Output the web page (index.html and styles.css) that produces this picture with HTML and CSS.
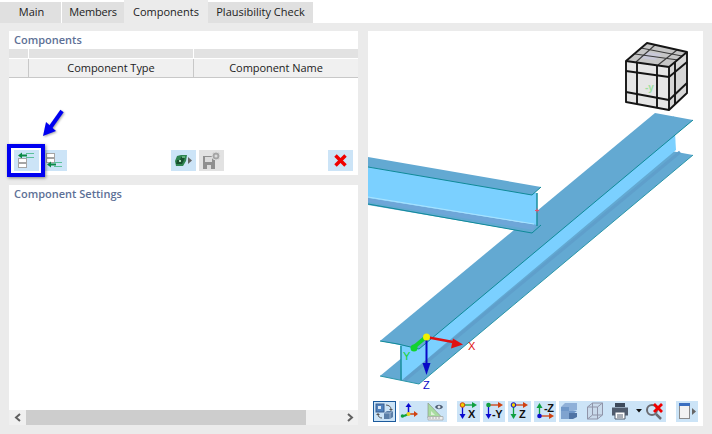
FILE: index.html
```html
<!DOCTYPE html>
<html lang="en">
<head>
  <meta charset="UTF-8">
  <title>Components</title>
  <link rel="stylesheet" href="styles.css">
</head>
<body>
  <div class="tabs">
    <div class="tab tab-main">Main</div>
    <div class="tab tab-members">Members</div>
    <div class="tab tab-active">Components</div>
    <div class="tab tab-check">Plausibility Check</div>
  </div>

  <div class="main">
    <div class="left">
      <div class="panel panel-components">
        <h4>Components</h4>
        <div class="table-head">
          <div class="head-row head-top"><span class="c1"></span><span class="c2"></span><span class="c3"></span></div>
          <div class="head-row head-names"><span class="c1"></span><span class="c2">Component Type</span><span class="c3">Component Name</span></div>
        </div>
        <div class="table-body"></div>
        <div class="comp-tools">
          <button class="tool tool-25">
            <svg width="25" height="21" viewBox="0 0 25 21">
              <path d="M12 3.500h8M12 7.500h8" stroke="#5cc09a" fill="none"/>
              <path d="M4 5.500l4-3v2h5v2H8v2z" fill="#0b8a45"/>
              <rect x="4.500" y="8.500" width="8" height="4" fill="#fff" stroke="#a5a5a5"/>
              <rect x="4.500" y="13.500" width="8" height="4" fill="#fff" stroke="#a5a5a5"/>
            </svg>
          </button>
          <button class="tool tool-23 tool-second">
            <svg width="23" height="21" viewBox="0 0 23 21">
              <rect x="2.500" y="3.500" width="8" height="4" fill="#fff" stroke="#a5a5a5"/>
              <rect x="2.500" y="8.500" width="8" height="4" fill="#fff" stroke="#a5a5a5"/>
              <path d="M10 12.500h8M10 16.500h8" stroke="#5cc09a" fill="none"/>
              <path d="M3 14.500l4-3v2h5v2H7v2z" fill="#0b8a45"/>
            </svg>
          </button>
          <button class="tool tool-25 push">
            <svg width="25" height="21" viewBox="0 0 25 21">
              <path d="M4 11l2-5 4-1h6l-1 6-3 5H5z" fill="#2e8450"/>
              <path d="M6 10h3l1-3h4l-1 3-2 4H5z" fill="#17502e"/>
              <path d="M8 10h2v2H8z" fill="#a9d8b8"/>
              <path d="M11 6h3v2h-3z" fill="#5fae7c"/>
              <path d="M17 7l4 3.500-4 3.500z" fill="#666"/>
            </svg>
          </button>
          <button class="tool tool-25 tool-off">
            <svg width="25" height="21" viewBox="0 0 25 21">
              <path d="M4 6h12v13H4z" fill="#8f8f8f"/>
              <path d="M6 7h7v5H6z" fill="#dcdcdc"/>
              <path d="M8 15h4v4H8z" fill="#dcdcdc"/>
              <circle cx="17" cy="6" r="4" fill="#a5a5a5" stroke="#dcdcdc"/>
              <circle cx="17" cy="6" r="1.500" fill="#dcdcdc"/>
            </svg>
          </button>
          <button class="tool tool-25 tool-delete">
            <svg width="25" height="21" viewBox="0 0 25 21">
              <path d="M7.500 5.500l10 10M17.500 5.500l-10 10" stroke="#f00000" stroke-width="3.500" fill="none"/>
            </svg>
          </button>
        </div>

        <!-- annotation over the toolbar -->
        <div class="marker"></div>
        <svg class="marker-arrow" width="30" height="36" viewBox="0 0 30 36">
          <path d="M22 3L10 20" stroke="#0000f0" stroke-width="4" fill="none"/>
          <path d="M3 28l3-14 10 9z" fill="#0000f0"/>
        </svg>
      </div>

      <div class="panel panel-settings">
        <h4>Component Settings</h4>
        <div class="settings-body"></div>
        <div class="scrollbar">
          <span class="scroll-btn">
            <svg width="8" height="9" viewBox="0 0 8 9"><path d="M6 1L2 4.500 6 8" stroke="#606060" stroke-width="2" fill="none"/></svg>
          </span>
          <div class="scroll-track"><div class="scroll-thumb"></div></div>
          <span class="scroll-btn">
            <svg width="8" height="9" viewBox="0 0 8 9"><path d="M2 1l4 3.500L2 8" stroke="#606060" stroke-width="2" fill="none"/></svg>
          </span>
        </div>
      </div>
    </div>

    <div class="panel panel-view">
      <svg class="view" width="335" height="366" viewBox="368 31 335 366">
        <!-- long beam -->
        <polygon points="380,376 655,148 693,155 419,384" fill="#63a9d2"/>
        <polygon points="400,345 674,116 676,150 402,380" fill="#7bd0ff"/>
        <line x1="405" y1="380" x2="680" y2="152" stroke="#5f9fcb" stroke-width="3"/>
        <line x1="401" y1="346" x2="401" y2="380" stroke="#1a8f9e" stroke-width="1.500"/>
        <polygon points="380,341 655,113 693,120 419,349" fill="#63a9d2"/>
        <polyline points="380,341 398,344 419,349 693,120" fill="none" stroke="#0f8a98"/>
        <polyline points="380,376 419,384 693,155" fill="none" stroke="#2a96a8" stroke-width="1"/>

        <!-- cross beam -->
        <polygon points="368,198 536,225 541,225 532,233 368,205" fill="#63a9d2"/>
        <polygon points="368,167 537,193 537,225 368,198" fill="#7bd0ff"/>
        <polygon points="368,198 536,225 533,230 368,202" fill="#6ea6d8"/>
        <line x1="368" y1="197" x2="534" y2="224" stroke="#a9e3ff"/>
        <line x1="537" y1="193" x2="537" y2="226" stroke="#1a8f9e" stroke-width="1.500"/>
        <polyline points="368,204 532,233 541,225" fill="none" stroke="#0f8a98"/>
        <polygon points="368,157 541,187 532,195 368,167" fill="#63a9d2"/>
        <polyline points="368,167 532,195 541,187" fill="none" stroke="#0f8a98"/>
        <path d="M535 210.500h4M537 208.500v4" stroke="#e8506a"/>

        <!-- view cube -->
        <polygon points="647,43 687,52 669,67 626,61" fill="#c6c6c6"/>
        <polygon points="626,61 669,67 669,110 626,102" fill="#e6e6e6"/>
        <polygon points="669,67 687,52 687,93 669,110" fill="#d6d6d6"/>
        <polygon points="647,52 662,54 655,60 639,58" fill="#c8c8d8"/>
        <g fill="none" stroke="#3a3a3a" stroke-width="1.100">
          <line x1="636" y1="62" x2="655" y2="45"/>
          <line x1="658" y1="65" x2="677" y2="50"/>
          <line x1="635" y1="54" x2="678" y2="60"/>
          <line x1="641" y1="48" x2="682" y2="56"/>
        </g>
        <g fill="none" stroke="#151515" stroke-width="1.900" stroke-linejoin="round">
          <polygon points="647,43 687,52 687,93 669,110 626,102 626,61"/>
          <polyline points="626,61 669,67 687,52"/>
          <line x1="669" y1="67" x2="669" y2="110"/>
          <line x1="637" y1="62" x2="637" y2="104"/>
          <line x1="657" y1="65" x2="657" y2="108"/>
          <line x1="626" y1="71" x2="669" y2="77"/>
          <line x1="626" y1="92" x2="669" y2="100"/>
          <line x1="669" y1="77" x2="687" y2="62"/>
          <line x1="669" y1="100" x2="687" y2="83"/>
          <line x1="675" y1="62" x2="675" y2="104"/>
        </g>
        <text class="cube-label" x="645" y="91">-y</text>

        <!-- axes -->
        <path d="M426 337L414 347" stroke="#12d32e" stroke-width="4"/>
        <circle cx="414" cy="348" r="3.500" fill="#12d32e"/>
        <path d="M426 337L453 342" stroke="#e01010" stroke-width="2.500"/>
        <path d="M463 344.500l-12 4 2-10z" fill="#e01010"/>
        <path d="M426.500 337V364" stroke="#0808c8" stroke-width="2"/>
        <path d="M426.500 375l-4-12h8z" fill="#0808c8"/>
        <circle cx="426.500" cy="337" r="3.500" fill="#f0f000"/>
        <text class="axis axis-x" x="468" y="350">X</text>
        <text class="axis axis-y" x="403" y="360">Y</text>
        <text class="axis axis-z" x="423" y="389">Z</text>
      </svg>

      <div class="view-tools">
        <button class="tool tool-23 tool-on">
          <svg width="21" height="19" viewBox="0 0 21 19">
            <rect x="2" y="2" width="8" height="8" fill="#4f81bd" stroke="#3a5f8f"/>
            <rect x="4" y="4" width="3" height="3" fill="#dbe8f5"/>
            <path d="M12 3c3 0 5 2 5 4" stroke="#555" fill="none"/>
            <path d="M15 7h4l-2 2z" fill="#555"/>
            <path d="M4 12c0 3 2 4 4 4" stroke="#555" fill="none"/>
            <path d="M2 13l2-2 2 2z" fill="#555"/>
            <path d="M10 11l3-2h6v6l-3 2h-6z" fill="#5b7fa8"/>
            <path d="M10 11h6v6M16 11l3-2" stroke="#b9cde2" stroke-width="0.700" fill="none"/>
          </svg>
        </button>
        <button class="tool tool-48">
          <svg width="48" height="21" viewBox="0 0 48 21">
            <path d="M9.500 13V5" stroke="#0a0ad0" stroke-width="1.500"/>
            <path d="M9.500 2l3 4h-6z" fill="#0a0ad0"/>
            <path d="M9.500 13H16" stroke="#d04010" stroke-width="1.500"/>
            <path d="M19 13l-4 3v-6z" fill="#d04010"/>
            <path d="M9.500 13L5 15" stroke="#10a040" stroke-width="2"/>
            <circle cx="3.500" cy="15" r="1.800" fill="#10a040"/>
            <circle cx="9.500" cy="13" r="2" fill="#e8d020"/>
            <path d="M29 2v15h14.500z" fill="#a8dca0" stroke="#8a9a8a" stroke-width="0.700"/>
            <path d="M32 10v4h4z" fill="#dff0da"/>
            <path d="M29 15.500h15v3.500H29z" fill="#eee" stroke="#999" stroke-width="0.600"/>
            <path d="M31 16v2M34 16v2M37 16v2M40 16v2" stroke="#888" stroke-width="0.600"/>
            <path d="M36 6c2-3 6-3 8 0-2 3-6 3-8 0z" fill="#4a5a70"/>
            <circle cx="40" cy="6" r="1.500" fill="#dfe6ee"/>
          </svg>
        </button>
        <button class="tool tool-23 gap-left">
          <svg width="23" height="21" viewBox="0 0 23 21">
            <path d="M5.500 4H16" stroke="#10a040" stroke-width="1.300"/>
            <path d="M20 4l-5 3V1z" fill="#10a040"/>
            <path d="M5.500 4v10" stroke="#0a0ad0" stroke-width="1.300"/>
            <path d="M5.500 18l-3-5h6z" fill="#0a0ad0"/>
            <circle cx="5.500" cy="4" r="2.300" fill="#f0d000" stroke="#d04010"/>
            <text class="tool-label" x="11" y="17">X</text>
          </svg>
        </button>
        <button class="tool tool-22">
          <svg width="22" height="21" viewBox="0 0 22 21">
            <path d="M5.500 4H16" stroke="#d04010" stroke-width="1.300"/>
            <path d="M20 4l-5 3V1z" fill="#d04010"/>
            <path d="M5.500 4v10" stroke="#0a0ad0" stroke-width="1.300"/>
            <path d="M5.500 18l-3-5h6z" fill="#0a0ad0"/>
            <circle cx="5.500" cy="4" r="2.300" fill="#10a040"/>
            <text class="tool-label" x="9" y="17">-Y</text>
          </svg>
        </button>
        <button class="tool tool-23">
          <svg width="23" height="21" viewBox="0 0 23 21">
            <path d="M5.500 4H16" stroke="#d04010" stroke-width="1.300"/>
            <path d="M20 4l-5 3V1z" fill="#d04010"/>
            <path d="M5.500 4v10" stroke="#10a040" stroke-width="1.300"/>
            <path d="M5.500 18l-3-5h6z" fill="#10a040"/>
            <circle cx="5.500" cy="4" r="2.300" fill="#f0d000" stroke="#0a0ad0"/>
            <text class="tool-label" x="11" y="17">Z</text>
          </svg>
        </button>
        <button class="tool tool-22">
          <svg width="22" height="21" viewBox="0 0 22 21">
            <path d="M5.500 15V6" stroke="#10a040" stroke-width="1.300"/>
            <path d="M5.500 2l3 5h-6z" fill="#10a040"/>
            <path d="M5.500 15H16" stroke="#d04010" stroke-width="1.300"/>
            <path d="M20 15l-5 3v-6z" fill="#d04010"/>
            <circle cx="5.500" cy="15" r="2.300" fill="#1010d0"/>
            <text class="tool-label" x="10" y="11">-Z</text>
          </svg>
        </button>
        <button class="tool tool-107">
          <svg width="107" height="21" viewBox="0 0 107 21">
            <path d="M2 6l4-4h12v7l-4 1v6l-3 2H2z" fill="#8fb0d8"/>
            <path d="M2 6h8v4h8l-4 3H2z" fill="#6f97c8"/>
            <path d="M2 10h8v8H2z" fill="#7fa3cf"/>
            <path d="M10 12h8v4l-4 2h-4z" fill="#4f74a5"/>
            <g fill="#c5cfe0" fill-opacity="0.500" stroke="#8f94a8">
              <path d="M28.500 6l5-4h10v12l-5 4h-10z"/>
              <path d="M28.500 6h10v12M38.500 6l5-4" fill="none"/>
              <path d="M28.500 18l5-4h10M33.500 2v12" fill="none"/>
            </g>
            <path d="M56 2h10v4H56z" fill="#3c4a5c"/>
            <path d="M53 6.500h16v8H53z" fill="#4f5c6e"/>
            <path d="M56 11h10v7H56z" fill="#fff" stroke="#4f5c6e"/>
            <path d="M58 14h6M58 16h6" stroke="#4f5c6e"/>
            <path d="M77 8h6l-3 3.500z" fill="#111"/>
            <circle cx="93" cy="9" r="5" fill="none" stroke="#6a6a70" stroke-width="2"/>
            <path d="M97 13l5 5" stroke="#6a6a70" stroke-width="2.500"/>
            <path d="M95 3l8 8M103 3l-8 8" stroke="#f00000" stroke-width="2.800"/>
          </svg>
        </button>
        <button class="tool tool-22 gap-left">
          <svg width="22" height="21" viewBox="0 0 22 21">
            <rect x="3.500" y="2.500" width="10" height="15" fill="#f2f2f2" stroke="#8a8a8a"/>
            <rect x="3" y="2" width="11" height="3" fill="#3b6fc0"/>
            <path d="M16 7l4 3.500-4 3.500z" fill="#666"/>
          </svg>
        </button>
      </div>
    </div>
  </div>
</body>
</html>
```

FILE: styles.css
```css
* {
  box-sizing: border-box;
}

body {
  margin: 0;
  background: #ebebeb;
  font-family: "Open Sans", sans-serif;
  font-size: 11px;
  color: #222;
  width: 712px;
  height: 434px;
  overflow: hidden;
}

/* tabs */
.tabs {
  display: flex;
  align-items: flex-end;
  height: 23px;
  background: #fff;
}

.tab {
  height: 21px;
  background: #e0e0e0;
  text-align: center;
  line-height: 20px;
  font-size: 11px;
}

.tab-main {
  width: 61px;
  padding-left: 2px;
  margin-right: 1px;
}

.tab-members {
  width: 62px;
  letter-spacing: -0.200px;
}

.tab-active {
  width: 84px;
  height: 23px;
  background: #ebebeb;
  line-height: 24px;
}

.tab-check {
  width: 105px;
}

/* layout */
.main {
  display: flex;
  gap: 10px;
  padding: 8px 9px 0;
}

.left {
  width: 349px;
  display: flex;
  flex-direction: column;
  gap: 10px;
}

.panel {
  background: #fff;
}

.panel h4 {
  margin: 0;
  height: 18px;
  padding-left: 5px;
  font-size: 11px;
  font-weight: 600;
  line-height: 18px;
  color: #5d7096;
}

.panel-components {
  position: relative;
  height: 144px;
  display: flex;
  flex-direction: column;
}

.panel-settings {
  height: 240px;
  display: flex;
  flex-direction: column;
}

.panel-view {
  width: 335px;
  height: 395px;
  display: flex;
  flex-direction: column;
}

/* table header */
.head-row {
  display: flex;
  background: #e2e2e2;
}

.head-row span {
  border-left: 1px solid #fff;
  text-align: center;
}

.head-row .c1 {
  width: 19px;
  border-left: 0;
}

.head-row .c2 {
  width: 165px;
}

.head-row .c3 {
  flex: 1;
}

.head-top {
  height: 9px;
  margin-bottom: 1px;
}

.head-names {
  height: 19px;
  line-height: 18px;
  background: #f0f0f0;
  border-bottom: 1px solid #c8c8c8;
  letter-spacing: -0.050px;
}

.head-names span {
  border-left-color: #c8c8c8;
}

.table-body {
  flex: 1;
}

/* tool buttons */
.comp-tools {
  display: flex;
  gap: 3px;
  padding: 0 5px 4px;
}

.tool {
  display: block;
  height: 21px;
  padding: 0;
  border: 0;
  background: #cce4f7;
}

.tool svg {
  display: block;
}

.tool-22 {
  width: 22px;
}

.tool-23 {
  width: 23px;
}

.tool-25 {
  width: 25px;
}

.tool-48 {
  width: 48px;
}

.tool-107 {
  width: 107px;
}

.tool-second {
  margin-left: 2px;
}

.tool-off {
  background: #e2e2e2;
}

.tool-delete {
  margin-left: 101px;
}

.push {
  margin-left: 101px;
}

.tool-on {
  border: 1px solid #1b5a9c;
}

.gap-left {
  margin-left: 7px;
}

.marker {
  position: absolute;
  left: -2px;
  top: 113px;
  width: 38px;
  height: 33px;
  border: 4px solid #0000f0;
  box-shadow: 1px 1px 3px rgba(0, 0, 0, 0.45);
}

.marker-arrow {
  position: absolute;
  left: 31px;
  top: 77px;
  filter: drop-shadow(1px 1px 1px rgba(0, 0, 0, 0.35));
}

/* scrollbar */
.settings-body {
  flex: 1;
}

.scrollbar {
  display: flex;
  align-items: center;
  height: 15px;
  background: #f0f0f0;
}

.scroll-btn {
  width: 17px;
  display: flex;
  justify-content: center;
}

.scroll-track {
  flex: 1;
  height: 15px;
}

.scroll-thumb {
  width: 280px;
  height: 15px;
  background: #cdcdcd;
}

/* model view */
.view {
  display: block;
  flex: none;
}

.view-tools {
  display: flex;
  gap: 3px;
  padding: 4px 5px;
}

.tool-label {
  font-family: "Liberation Sans", sans-serif;
  font-size: 11px;
  font-weight: 700;
  letter-spacing: -0.500px;
  fill: #111;
}

.axis {
  font-family: "Liberation Sans", sans-serif;
  font-size: 11px;
}

.axis-x {
  fill: #e01010;
}

.axis-y {
  fill: #12d32e;
}

.axis-z {
  fill: #0808c8;
}

.cube-label {
  font-family: "Liberation Sans", sans-serif;
  font-size: 10px;
  font-weight: 700;
  fill: #9be0a0;
}
```
